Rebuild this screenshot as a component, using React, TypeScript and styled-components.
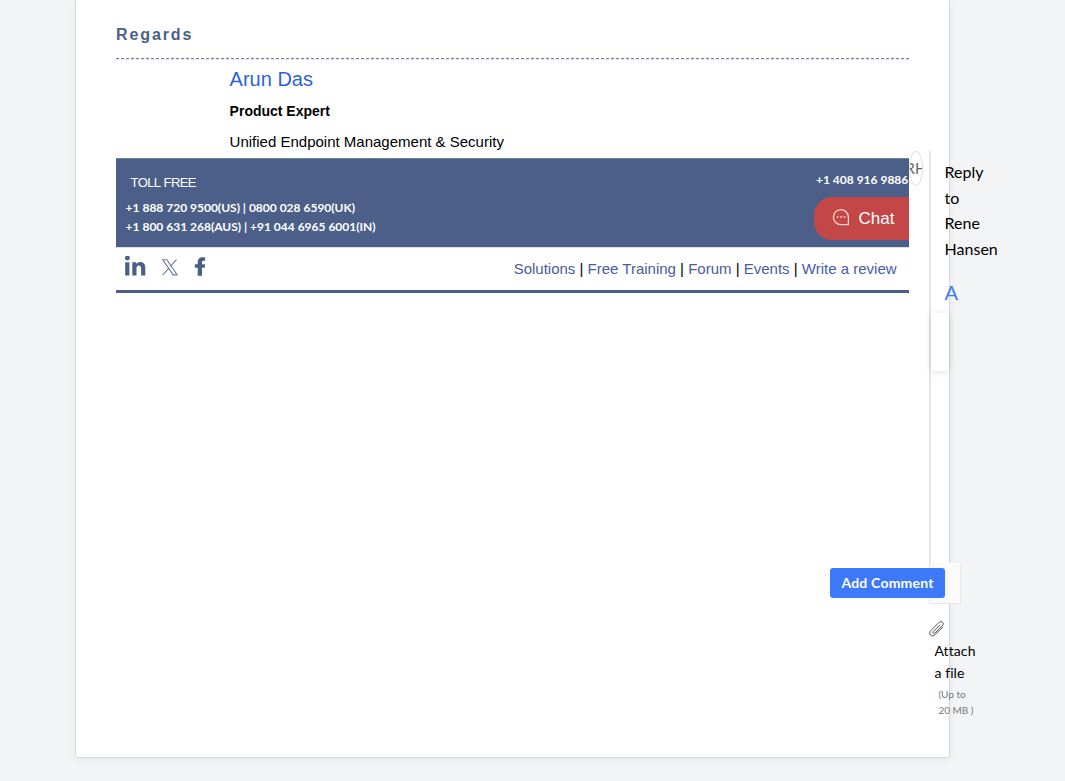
import React from "react";
import styled, { createGlobalStyle } from "styled-components";

const navy = "#4b5f89";

const Global = createGlobalStyle`
  * { box-sizing: border-box; }
  html, body { margin: 0; height: 781px; overflow: hidden; background: #f3f4f6; }
  body { font-family: Lato, "Liberation Sans", sans-serif; color: #000; }
`;

const Page = styled.main`
  width: 1065px;
  height: 781px;
  padding: 0 0 23px 75px;
  display: flex;
`;

const Card = styled.section`
  width: 875px;
  height: 758px;
  padding-left: 40px;
  display: flex;
  align-items: flex-start;
  background: #fff;
  border: 1px solid #d5d9dd;
  border-top: 0;
  border-radius: 0 0 2px 2px;
  box-shadow: 0 2px 8px rgba(0, 0, 0, 0.05);
`;

const Message = styled.article`
  flex: 0 0 793px;
  height: 757px;
  display: flex;
  flex-direction: column;
  font-family: "Liberation Sans", Arial, sans-serif;
`;

const Regards = styled.h2`
  margin: 0;
  padding-top: 25px;
  height: 58px;
  font-size: 16px;
  line-height: 20px;
  letter-spacing: 1.9px;
  color: ${navy};
`;

const Dashes = styled.svg`
  display: block;
  flex: 0 0 2px;
`;

const Sender = styled.div`
  height: 98px;
  padding-left: 113.6px;
  white-space: nowrap;
`;

const Name = styled.div`
  padding-top: 7px;
  height: 41px;
  font-size: 20px;
  line-height: 24px;
  color: #2d63d8;
`;

const Role = styled.div`
  height: 31px;
  font-size: 14px;
  line-height: 20px;
  font-weight: 700;
`;

const Team = styled.div`
  font-size: 15px;
  line-height: 20px;
`;

const Banner = styled.div`
  height: 89px;
  display: flex;
  justify-content: space-between;
  background: ${navy};
  border-top: 1px solid #6e7fa1;
  color: #fff;
  white-space: nowrap;
`;

const Phones = styled.div`
  padding: 14px 0 0 9.6px;
  font-family: Lato, sans-serif;
  font-size: 12px;
  font-weight: 700;
  line-height: 19px;
`;

const TollFree = styled.div`
  height: 25px;
  padding-left: 5px;
  font-family: "Liberation Sans", Arial, sans-serif;
  font-size: 13px;
  font-weight: 400;
  line-height: 20px;
  letter-spacing: -0.6px;
  word-spacing: 0.6px;
`;

const Contact = styled.div`
  width: 95px;
  padding-top: 11px;
  display: flex;
  flex-direction: column;
`;

const Direct = styled.div`
  height: 27px;
  padding-left: 2px;
  font-family: Lato, sans-serif;
  font-size: 12px;
  font-weight: 700;
  line-height: 20px;
`;

const Chat = styled.div`
  height: 43px;
  padding-left: 18px;
  display: flex;
  align-items: center;
  gap: 8.5px;
  border-radius: 18px 0 0 18px;
  background: #c44747;
  font-size: 17px;
  svg { margin-top: -4px; }
`;

const Footer = styled.div`
  height: 46px;
  display: flex;
  justify-content: space-between;
  border-top: 1px solid #d6deec;
  border-bottom: 3px solid ${navy};
`;

const Social = styled.div`
  display: flex;
  padding: 8px 0 0 9px;
`;

const Links = styled.nav`
  padding: 11px 12.4px 0 0;
  font-size: 15px;
  line-height: 20px;
  white-space: nowrap;
  a { color: #485ca0; }
`;

const Avatar = styled.div`
  flex: 0 0 14px;
  height: 35px;
  margin: 151px 6px 0 0;
  display: flex;
  justify-content: center;
  align-items: center;
  overflow: hidden;
  border: 1px solid #dcdcdc;
  border-radius: 50%;
  background: #fff;
  color: #666;
  font-size: 15px;
  line-height: 18px;
  padding-bottom: 2px;
`;

const Reply = styled.aside`
  flex: 0 0 32px;
  padding-top: 151px;
  display: flex;
  flex-direction: column;
`;

const Editor = styled.div`
  width: 20px;
  height: 412px;
  border-left: 2px solid #e2e6ea;
`;

const ReplyTo = styled.div`
  width: 56px;
  height: 130px;
  padding: 8px 0 0 13.6px;
  font-size: 16px;
  line-height: 25.7px;
`;

const FontMark = styled.div`
  height: 32px;
  margin-top: -1px;
  margin-bottom: 1px;
  padding-left: 13.6px;
  font-size: 20px;
  line-height: 24px;
  color: #3d79fb;
`;

const Input = styled.div`
  width: 18px;
  height: 58px;
  background: #fff;
  box-shadow: 0 1px 6px rgba(0, 0, 0, 0.14);
`;

const Actions = styled.div`
  width: 32px;
  height: 41px;
  display: flex;
  justify-content: flex-end;
  padding: 5px 15px 0 0;
  background: #fafafa;
  border: 1px solid #e4e7ea;
  border-top: 0;
`;

const Submit = styled.button`
  flex: 0 0 115px;
  height: 30px;
  padding: 0;
  border: 0;
  border-radius: 3px;
  background: #3d79fb;
  color: #fff;
  font: 700 14px/30px Lato, sans-serif;
  letter-spacing: 0.2px;
`;

const Attach = styled.div`
  padding-top: 17px;
  svg { display: block; }
`;

const AttachLabel = styled.div`
  width: 50px;
  padding: 3px 0 0 5.4px;
  font-size: 14px;
  line-height: 22px;
  letter-spacing: 0.1px;
`;

const Limit = styled.div`
  width: 50px;
  padding: 2px 0 0 9.4px;
  color: #777;
  font-size: 10px;
  line-height: 16px;
`;

const links = ["Solutions", "Free Training", "Forum", "Events", "Write a review"];

export default function App() {
  return (
    <>
      <Global />
      <Page>
        <Card>
          <Message>
            <Regards>Regards</Regards>
            <Dashes width="793" height="2">
              <path d="M0 .5H793" stroke="#7482aa" strokeDasharray="3 2" />
              <path d="M0 1.5H793" stroke="#dce0ee" strokeDasharray="3 2" />
            </Dashes>
            <Sender>
              <Name>Arun Das</Name>
              <Role>Product Expert</Role>
              <Team>Unified Endpoint Management &amp; Security</Team>
            </Sender>
            <Banner>
              <Phones>
                <TollFree>TOLL FREE</TollFree>
                <div>+1 888 720 9500(US) | 0800 028 6590(UK)</div>
                <div>+1 800 631 268(AUS) | +91 044 6965 6001(IN)</div>
              </Phones>
              <Contact>
                <Direct>+1 408 916 9886</Direct>
                <Chat>
                  <svg width="18" height="18" viewBox="0 0 18 18" fill="none" stroke="#f3d5d5" strokeWidth="1.3">
                    <path d="M16.4 16.6H9A7.5 7.5 0 1 1 16.400 9Z" />
                    <path d="M4.700 9h1.700M8.200 9h1.700M11.700 9h1.700" strokeWidth="1.700" />
                  </svg>
                  Chat
                </Chat>
              </Contact>
            </Banner>
            <Footer>
              <Social>
                <svg width="22" height="22" viewBox="0 0 22 22" fill={navy}>
                  <circle cx="2.4" cy="2" r="2.4" />
                  <path d="M.2 6.200h4.200V19.600H.2zM7.300 6.200h4v1.800c2.200-3.300 9-2.900 9 3.300v8.300h-4.200v-7.300c0-4-4.600-3.700-4.600-.3v7.600H7.300z" />
                </svg>
                <svg width="47" height="22" viewBox="0 0 47 22" fill="none" stroke="#6b7ba0" strokeWidth="1.100">
                  <path d="M15.800 3.700h4.100l10.300 15.200h-4.100zM29.500 3.700l-6.300 6.900M22.100 12 15.800 18.900" />
                </svg>
                <svg width="14" height="22" viewBox="0 0 14 22" fill={navy}>
                  <path d="M3.700 19.700v-8H.8V8.200h2.900V6.300c0-3.500 1.700-5.100 4.700-5.100 1.200 0 2.200.1 2.700.2v3.300H9.500c-1.200 0-1.500.600-1.500 1.600v1.900h3.200l-.5 3.500H8v8z" />
                </svg>
              </Social>
              <Links>
                {links.map((label, i) => (
                  <React.Fragment key={label}>
                    {i > 0 && " | "}
                    <a>{label}</a>
                  </React.Fragment>
                ))}
              </Links>
            </Footer>
          </Message>
          <Avatar>RH</Avatar>
          <Reply>
            <Editor>
              <ReplyTo>Reply to Rene Hansen</ReplyTo>
              <FontMark>A</FontMark>
              <Input />
            </Editor>
            <Actions>
              <Submit>Add Comment</Submit>
            </Actions>
            <Attach>
              <svg width="16" height="16" viewBox="0 0 16 16" fill="none" stroke="#444" strokeWidth=".9" strokeLinecap="round">
                <path d="m10.800 4.100-6.200 6.200c-1.400 1.400.3 2.900 1.600 1.600l7-7c3-3-.9-5.800-3.300-3.400L2 9.400C-1.500 12.900 2.700 17.100 6.200 13.600l7.500-7.500" />
              </svg>
              <AttachLabel>Attach a file</AttachLabel>
              <Limit>(Up to 20 MB )</Limit>
            </Attach>
          </Reply>
        </Card>
      </Page>
    </>
  );
}
